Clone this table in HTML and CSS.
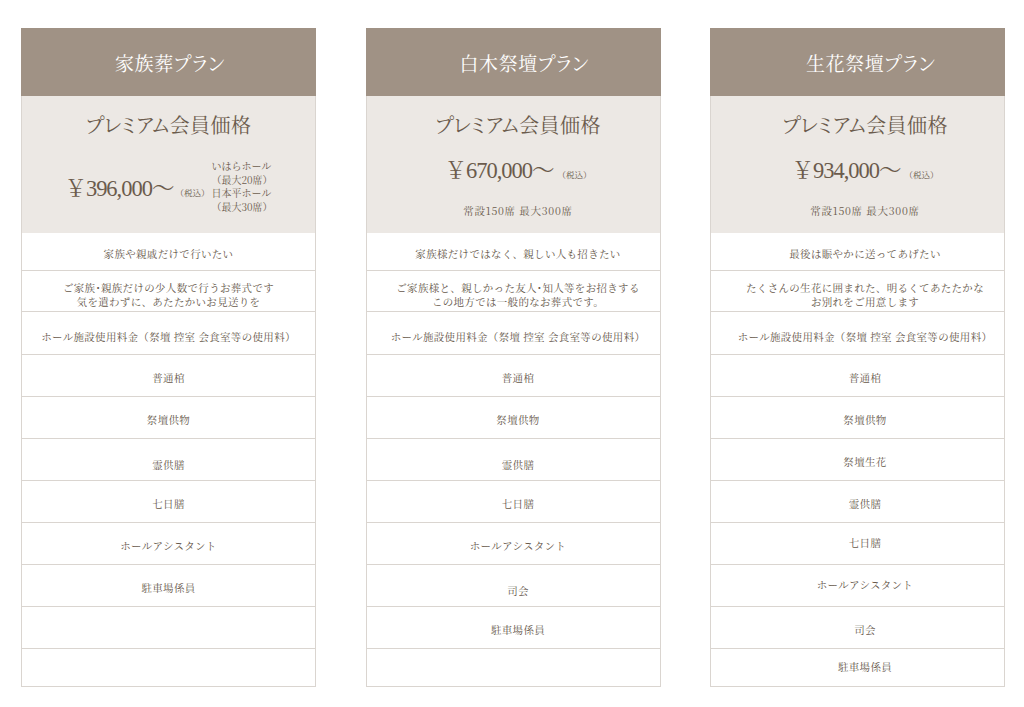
FILE: index.html
```html
<!DOCTYPE html>
<html lang="ja">
<head>
<meta charset="utf-8">
<title>プラン一覧</title>
<link rel="stylesheet" href="styles.css">
</head>
<body>
<div class="plans">
  <section class="card card--a">
    <h2 class="card__head">家族葬プラン</h2>
    <div class="card__price-box">
      <p class="card__label">プレミアム会員価格</p>
      <div class="price-line">
        <p class="price"><span class="price__num">￥396,000〜</span><span class="price__tax">（税込）</span></p>
        <p class="halls">いはらホール<br>（最大20席）<br>日本平ホール<br>（最大30席）</p>
      </div>
    </div>
    <ul class="rows">
      <li class="row row--first">家族や親戚だけで行いたい</li>
      <li class="row row--desc">ご家族･親族だけの少人数で行うお葬式です<br>気を遣わずに、あたたかいお見送りを</li>
      <li class="row row--hall">ホール施設使用料金（祭壇 控室 会食室等の使用料）</li>
      <li class="row">普通棺</li>
      <li class="row">祭壇供物</li>
      <li class="row row--low">霊供膳</li>
      <li class="row">七日膳</li>
      <li class="row">ホールアシスタント</li>
      <li class="row">駐車場係員</li>
      <li class="row"></li>
      <li class="row row--last"></li>
    </ul>
  </section>

  <section class="card card--b">
    <h2 class="card__head">白木祭壇プラン</h2>
    <div class="card__price-box">
      <p class="card__label">プレミアム会員価格</p>
      <p class="price price--solo"><span class="price__num">￥670,000〜</span><span class="price__tax">（税込）</span></p>
      <p class="seats">常設150席 最大300席</p>
    </div>
    <ul class="rows">
      <li class="row row--first">家族様だけではなく、親しい人も招きたい</li>
      <li class="row row--desc">ご家族様と、親しかった友人･知人等をお招きする<br>この地方では一般的なお葬式です。</li>
      <li class="row row--hall">ホール施設使用料金（祭壇 控室 会食室等の使用料）</li>
      <li class="row">普通棺</li>
      <li class="row">祭壇供物</li>
      <li class="row row--low">霊供膳</li>
      <li class="row">七日膳</li>
      <li class="row">ホールアシスタント</li>
      <li class="row row--low">司会</li>
      <li class="row">駐車場係員</li>
      <li class="row row--last"></li>
    </ul>
  </section>

  <section class="card card--c">
    <h2 class="card__head">生花祭壇プラン</h2>
    <div class="card__price-box">
      <p class="card__label">プレミアム会員価格</p>
      <p class="price price--solo"><span class="price__num">￥934,000〜</span><span class="price__tax">（税込）</span></p>
      <p class="seats">常設150席 最大300席</p>
    </div>
    <ul class="rows">
      <li class="row row--first">最後は賑やかに送ってあげたい</li>
      <li class="row row--desc">たくさんの生花に囲まれた、明るくてあたたかな<br>お別れをご用意します</li>
      <li class="row row--hall">ホール施設使用料金（祭壇 控室 会食室等の使用料）</li>
      <li class="row">普通棺</li>
      <li class="row">祭壇供物</li>
      <li class="row">祭壇生花</li>
      <li class="row">霊供膳</li>
      <li class="row row--up">七日膳</li>
      <li class="row row--up">ホールアシスタント</li>
      <li class="row">司会</li>
      <li class="row row--last row--up">駐車場係員</li>
    </ul>
  </section>
</div>
</body>
</html>
```

FILE: styles.css
```css
* {
  box-sizing: border-box;
}

html, body {
  margin: 0;
  padding: 0;
  background: #ffffff;
}

body {
  font-family: "Noto Serif CJK JP", "Liberation Serif", "Noto Sans CJK JP", serif;
  color: #6b5b4c;
}

.plans {
  display: flex;
  justify-content: space-between;
  padding: 28px 19px 0 21px;
}

.card {
  width: 295px;
  border: 1px solid #dad5d0;
  border-top: none;
  display: flex;
  flex-direction: column;
}

.card__head {
  margin: 0 -1px;
  height: 68px;
  background: #a09285;
  color: #ffffff;
  font-weight: normal;
  font-size: 19px;
  line-height: 70px;
  padding-left: 94px;
  font-feature-settings: "palt";
  letter-spacing: 0.03em;
}

.card--c .card__head {
  padding-left: 96px;
}

.card__price-box {
  height: 137px;
  background: #ece8e4;
  display: flex;
  flex-direction: column;
  align-items: center;
  padding-top: 15px;
}

.card--b .card__price-box,
.card--b .row {
  padding-left: 10px;
}

.card--c .card__price-box,
.card--c .row {
  padding-left: 15px;
}

.card__label {
  margin: 0;
  font-size: 20px;
  line-height: 28px;
  font-feature-settings: "palt";
  letter-spacing: 0.02em;
}

.price-line {
  display: flex;
  align-items: center;
  gap: 2px;
  margin-top: 20px;
  padding-left: 0;
}

.price {
  margin: 0;
  display: flex;
  align-items: baseline;
}

.price--solo {
  margin-top: 17px;
  line-height: 30px;
}

.price__num {
  font-family: "Liberation Serif", "Noto Serif CJK JP", "Noto Sans CJK JP", serif;
  font-size: 22.5px;
  letter-spacing: -0.045em;
}

.price__tax {
  font-size: 8.5px;
  margin-left: 4px;
}

.card--a .price__tax {
  margin-left: 2px;
}

.halls {
  margin: 0;
  font-size: 10px;
  line-height: 13.5px;
}

.seats {
  margin: 15px 0 0;
  font-size: 10.5px;
  line-height: 14px;
  letter-spacing: 0.07em;
}

.rows {
  list-style: none;
  margin: 0;
  padding: 0;
}

.row {
  height: 42px;
  border-bottom: 1px solid #dad5d0;
  display: flex;
  align-items: center;
  justify-content: center;
  text-align: center;
  font-size: 10.5px;
  line-height: 14px;
  color: #66574a;
  letter-spacing: 0.03em;
  padding-top: 4px;
}

.row--first {
  height: 38px;
}

.row--desc {
  height: 41px;
  padding-top: 7px;
}

.row--hall {
  height: 43px;
  padding-top: 7px;
}

.row--low {
  padding-top: 11px;
}

.row--up {
  padding-top: 0;
  padding-bottom: 2px;
}

.row--last {
  height: 37px;
  border-bottom: none;
}
```
